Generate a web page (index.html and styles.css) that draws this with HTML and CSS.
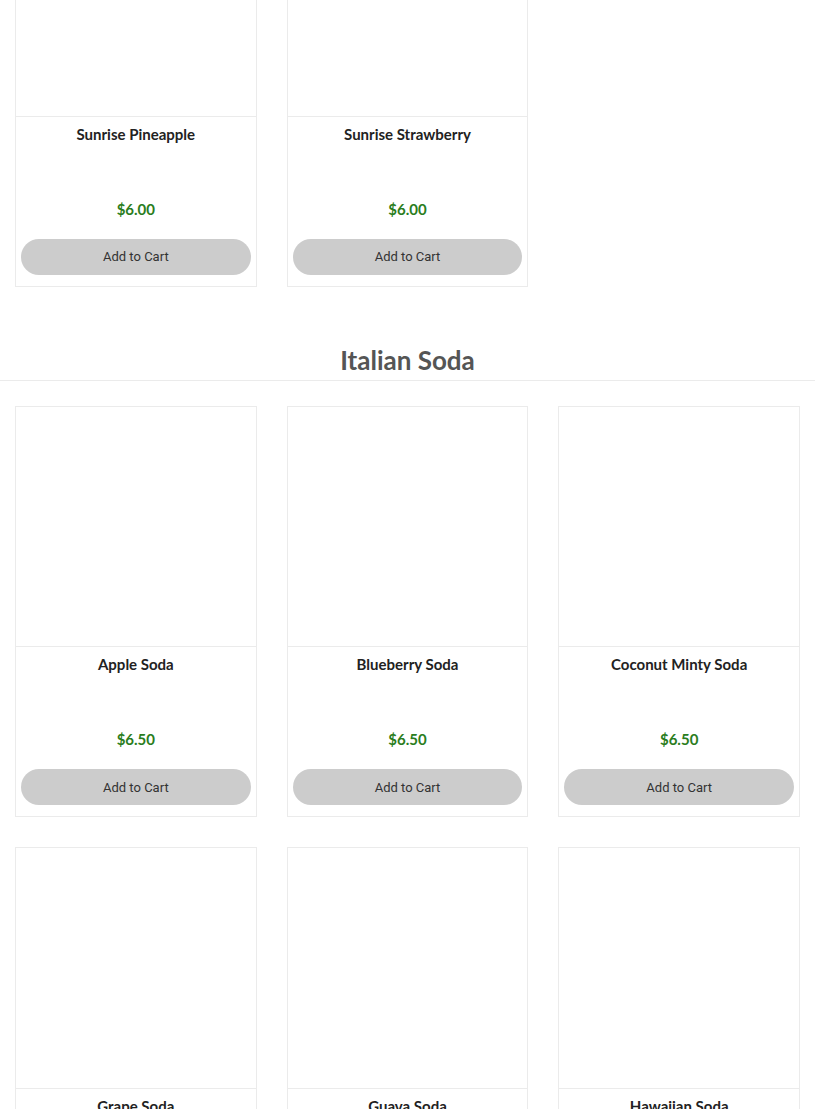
FILE: index.html
```html
<!DOCTYPE html>
<html lang="en">
<head>
<meta charset="utf-8">
<title>Menu</title>
<link rel="stylesheet" href="styles.css">
</head>
<body>
<div class="page">
  <section class="section section-first">
    <div class="grid">
      <div class="card">
        <div class="card-img"></div>
        <div class="card-info">
          <div class="card-name">Sunrise Pineapple</div>
          <div class="card-price">$6.00</div>
          <button class="card-btn">Add to Cart</button>
        </div>
      </div>
      <div class="card">
        <div class="card-img"></div>
        <div class="card-info">
          <div class="card-name">Sunrise Strawberry</div>
          <div class="card-price">$6.00</div>
          <button class="card-btn">Add to Cart</button>
        </div>
      </div>
    </div>
  </section>

  <section class="section">
    <h2 class="section-title">Italian Soda</h2>
    <div class="grid">
      <div class="card">
        <div class="card-img"></div>
        <div class="card-info">
          <div class="card-name">Apple Soda</div>
          <div class="card-price">$6.50</div>
          <button class="card-btn">Add to Cart</button>
        </div>
      </div>
      <div class="card">
        <div class="card-img"></div>
        <div class="card-info">
          <div class="card-name">Blueberry Soda</div>
          <div class="card-price">$6.50</div>
          <button class="card-btn">Add to Cart</button>
        </div>
      </div>
      <div class="card">
        <div class="card-img"></div>
        <div class="card-info">
          <div class="card-name">Coconut Minty Soda</div>
          <div class="card-price">$6.50</div>
          <button class="card-btn">Add to Cart</button>
        </div>
      </div>
      <div class="card">
        <div class="card-img"></div>
        <div class="card-info">
          <div class="card-name">Grape Soda</div>
          <div class="card-price">$6.50</div>
          <button class="card-btn">Add to Cart</button>
        </div>
      </div>
      <div class="card">
        <div class="card-img"></div>
        <div class="card-info">
          <div class="card-name">Guava Soda</div>
          <div class="card-price">$6.50</div>
          <button class="card-btn">Add to Cart</button>
        </div>
      </div>
      <div class="card">
        <div class="card-img"></div>
        <div class="card-info">
          <div class="card-name">Hawaiian Soda</div>
          <div class="card-price">$6.50</div>
          <button class="card-btn">Add to Cart</button>
        </div>
      </div>
    </div>
  </section>
</div>
</body>
</html>
```

FILE: styles.css
```css
html, body {
  margin: 0;
  padding: 0;
  background: #fff;
}

body {
  font-family: Lato, "Open Sans", Arial, sans-serif;
  color: #222;
  overflow: hidden;
}

.page {
  margin-top: -125px;
}

.section-title {
  margin: 57px 0 25px;
  padding: 0 0 4px;
  font-size: 26px;
  line-height: 32px;
  font-weight: 700;
  color: #555;
  text-align: center;
  border-bottom: 1px solid #ebebeb;
}

.grid {
  display: grid;
  grid-template-columns: repeat(3, 1fr);
  column-gap: 30px;
  row-gap: 30px;
  padding: 0 15px;
}

.card {
  border: 1px solid #ebebeb;
  background: #fff;
  display: flex;
  flex-direction: column;
}

.card-img {
  aspect-ratio: 1 / 1;
  border-bottom: 1px solid #ebebeb;
}

.card-info {
  padding: 7px 5px 11px;
  display: flex;
  flex-direction: column;
  align-items: stretch;
}

.card-name {
  font-size: 15px;
  line-height: 20px;
  font-weight: 700;
  color: #222;
  text-align: center;
  min-height: 76px;
}

.card-price {
  font-size: 15px;
  line-height: 18px;
  font-weight: 700;
  color: #2a7d20;
  text-align: center;
  margin-bottom: 21px;
}

.card-btn {
  height: 36px;
  border: none;
  border-radius: 18px;
  background: #cccccc;
  color: #333;
  font-family: Roboto, Arial, sans-serif;
  font-size: 13px;
  padding: 0;
  cursor: pointer;
}
```
